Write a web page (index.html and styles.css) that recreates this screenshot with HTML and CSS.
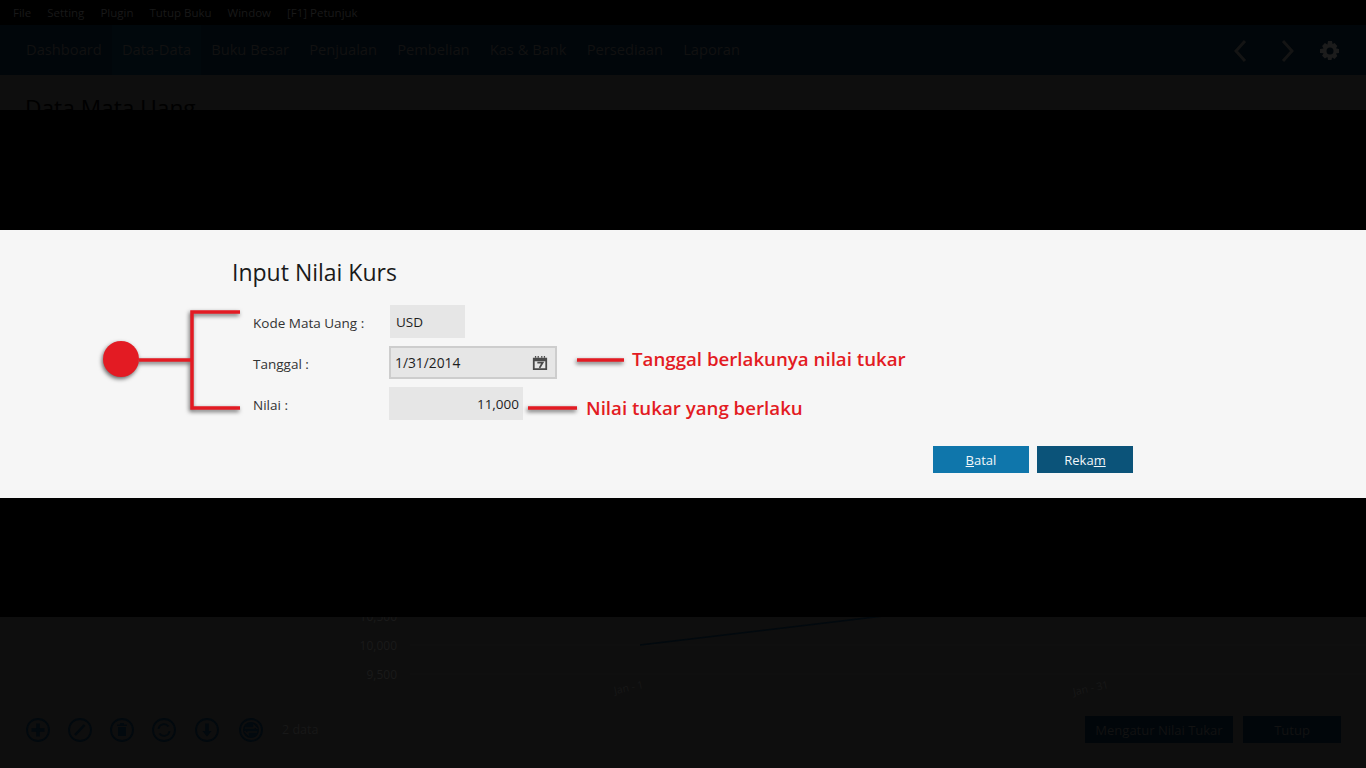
FILE: index.html
```html
<!DOCTYPE html>
<html lang="id">
<head>
<meta charset="utf-8">
<title>Data Mata Uang</title>
<link rel="stylesheet" href="styles.css">
</head>
<body>
<div class="app">
  <div class="menubar">
    <span>File</span><span>Setting</span><span>Plugin</span><span>Tutup Buku</span><span>Window</span><span>[F1] Petunjuk</span>
  </div>
  <nav class="navbar">
    <a>Dashboard</a><a class="active">Data-Data</a><a>Buku Besar</a><a>Penjualan</a><a>Pembelian</a><a>Kas &amp; Bank</a><a>Persediaan</a><a>Laporan</a>
    <div class="nav-tools">
      <svg class="chev-prev" width="13" height="24" viewBox="0 0 13 24"><path d="M11 2 2 12l9 10" class="chev"/></svg>
      <svg width="13" height="24" viewBox="0 0 13 24"><path d="M2 2l9 10-9 10" class="chev"/></svg>
      <svg width="22" height="22" viewBox="0 0 22 22"><path class="gear" fill-rule="evenodd" d="M9 1h4l.6 3 2-.9 2.8 2.8-1.4 2.4 3 .7v4l-3 .6 1.4 2.5-2.8 2.8-2.5-1.4-.6 2.5H9l-.6-2.9-2.5 1.4-2.8-2.8 1.4-2.5L1 13V9l3.500-.6L3.100 5.900l2.800-2.800 2.500 1.400zM11 7.500a3.500 3.500 0 1 0 0 7 3.500 3.500 0 0 0 0-7z"/></svg>
    </div>
  </nav>
  <main class="content">
    <h1>Data Mata Uang</h1>
    <svg class="chart" width="1366" height="643" viewBox="0 0 1366 643">
      <g class="grid"><path d="M410 520h1030M410 549h1030"/></g>
      <path class="series" d="M640 520 900 489"/>
      <g class="axis">
        <text x="397" y="496" text-anchor="end">10,500</text>
        <text x="397" y="525" text-anchor="end">10,000</text>
        <text x="397" y="554" text-anchor="end">9,500</text>
        <text class="tick" x="644" y="563" text-anchor="end" transform="rotate(-12 644 563)">Jan - 1</text>
        <text class="tick" x="1109" y="563" text-anchor="end" transform="rotate(-12 1109 563)">Jan - 31</text>
      </g>
    </svg>
    <footer class="toolbar">
      <div class="tool-icons">
        <svg class="tool" width="24" height="24" viewBox="0 0 24 24"><circle cx="12" cy="12" r="11"/><path class="thick" d="M12 5.500v13M5.500 12h13"/></svg>
        <svg class="tool" width="24" height="24" viewBox="0 0 24 24"><circle cx="12" cy="12" r="11"/><path class="thick-thin" d="M7 17 16.500 7"/></svg>
        <svg class="tool" width="24" height="24" viewBox="0 0 24 24"><circle cx="12" cy="12" r="11"/><path class="solid" d="M8 9h8v9H8zM7 6.500h10V8H7zM10 5h4v1.500h-4z"/></svg>
        <svg class="tool" width="24" height="24" viewBox="0 0 24 24"><circle cx="12" cy="12" r="11"/><path d="M6.500 11a5.500 5.500 0 0 1 10-2.500M17.500 13a5.500 5.500 0 0 1-10 2.500"/></svg>
        <svg class="tool tool-gap" width="24" height="24" viewBox="0 0 24 24"><circle cx="12" cy="12" r="11"/><path class="thick" d="M12 5.500v10"/><path class="solid" d="M7.500 13h9L12 18.500z"/></svg>
        <svg class="tool tool-gap-wide" width="24" height="24" viewBox="0 0 24 24"><circle cx="12" cy="12" r="11"/><circle class="solid" cx="12" cy="12" r="8"/><path class="cut" d="M6 10h9V7.500l3.500 3.500M18 14H9v2.500L5.500 13"/></svg>
      </div>
      <span class="count">2 data</span>
      <div class="page-actions">
        <button class="dark-btn wide">Mengatur Nilai Tukar</button>
        <button class="dark-btn">Tutup</button>
      </div>
    </footer>
  </main>
</div>

<div class="overlay">
  <section class="modal">
    <h2>Input Nilai Kurs</h2>
    <div class="form">
      <label>Kode Mata Uang :</label>
      <div class="field code">USD</div>
      <label>Tanggal :</label>
      <div class="field date">1/31/2014
        <svg class="cal" width="16" height="16" viewBox="0 0 18 18"><path class="cal-body" fill-rule="evenodd" d="M1 3h16v14H1zM3 7v8h12V7z"/><path class="cal-rings" d="M4 1v2M7 1v2M11 1v2M14 1v2"/><path class="cal-seven" d="M6 8.500h6L8.500 14.500"/></svg>
      </div>
      <label>Nilai :</label>
      <div class="field value">11,000</div>
    </div>
    <div class="modal-actions">
      <button class="btn batal"><u>B</u>atal</button>
      <button class="btn rekam">Reka<u>m</u></button>
    </div>
    <svg class="annot" width="1366" height="268" viewBox="0 0 1366 268">
      <g class="annot-lines">
        <circle class="dot" cx="121" cy="129" r="18"/>
        <path d="M139 130h53M240 82h-48v96h48M577 130h47M528 178h49"/>
      </g>
    </svg>
    <p class="note note-date">Tanggal berlakunya nilai tukar</p>
    <p class="note note-value">Nilai tukar yang berlaku</p>
  </section>
</div>
</body>
</html>
```
FILE: styles.css
```css
* { box-sizing: border-box; }
html, body { margin: 0; height: 100%; overflow: hidden; background: #0e0e0e; }
body { font-family: "Open Sans", "Noto Sans", sans-serif; }

.app { height: 768px; display: flex; flex-direction: column; }

.menubar { height: 25px; background: #000; display: flex; align-items: center; gap: 16px; padding: 0 0 1px 13px; font-size: 11.5px; color: #191919; }

.navbar { height: 50px; background: #01060a; display: flex; align-items: stretch; padding-left: 16px; font-size: 14.7px; color: #111; }
.navbar a { display: flex; align-items: center; padding: 0 10.1px 2px 10px; }
.navbar a.active { background: #01080c; }
.nav-tools { margin-left: auto; display: flex; align-items: center; gap: 25px; padding: 2px 25px 0 0; }
.chev-prev { margin-right: 9px; }
.chev { fill: none; stroke: #141414; stroke-width: 3; }
.gear { fill: #1c1c1c; }

.content { flex: 1; position: relative; display: flex; flex-direction: column; min-height: 0; }
.content h1 { margin: 0; padding: 16px 0 0 25px; font-size: 22.7px; font-weight: 400; color: #000; line-height: 34px; height: 50px; }
.chart { flex: none; display: block; overflow: hidden; }
.grid path { stroke: #111; fill: none; }
.series { stroke: #02090e; stroke-width: 1.5; fill: none; }
.axis text { font-size: 12px; fill: #1a1a1a; font-family: "Open Sans", sans-serif; }
.axis .tick { font-size: 10.5px; fill: #181818; }

.toolbar { position: absolute; left: 26px; right: 25px; bottom: 25px; height: 27px; display: flex; align-items: center; font-size: 12.500px; color: #181818; }
.tool-icons { display: flex; gap: 18px; }
.tool-gap { margin-left: 1px; }
.tool-gap-wide { margin-left: 2px; }
.tool { fill: none; stroke: #02090e; stroke-width: 1.8; }
.tool .thick { stroke-width: 3.500; }
.tool .thick-thin { stroke-width: 2.500; }
.tool .solid { fill: #02090e; stroke: none; }
.tool .cut { stroke: #0e0e0e; stroke-width: 1.500; }
.count { margin-left: 19px; }
.page-actions { margin-left: auto; display: flex; gap: 10px; }
.dark-btn { width: 98px; height: 27px; background: #01060a; border: 0; padding: 0; color: #121212; font: inherit; font-size: 13px; }
.dark-btn.wide { width: 148px; }

.overlay { position: absolute; left: 0; right: 0; top: 110px; height: 507px; background: #000; padding-top: 120px; }
.modal { position: relative; height: 268px; background: #f6f6f6; padding: 25px 0 0 232px; color: #1e1e1e; }
.modal h2 { margin: 0; font-size: 23px; font-weight: 400; line-height: 34px; color: #1a1a1a; height: 50px; }

.form { display: grid; grid-template-columns: 136px auto; grid-auto-rows: 33px; row-gap: 8px; padding-left: 21px; font-size: 13.5px; justify-items: start; align-items: center; }
.form label { color: #333; padding-top: 3px; }
.field { height: 33px; background: #e6e6e6; display: flex; align-items: center; font-size: 13.500px; color: #1e1e1e; }
.field.code { width: 75px; margin-left: 1px; padding: 0 0 0 6px; }
.field.date { width: 168px; border: 2px solid #cdcdcd; padding: 0 7px 0 4px; justify-content: space-between; font-size: 13.8px; }
.field.value { width: 134px; justify-content: flex-end; padding: 0 4px 0 0; }
.cal-body { fill: #4a4a4a; }
.cal-rings { stroke: #4a4a4a; stroke-width: 1.400; fill: none; }
.cal-seven { stroke: #4a4a4a; stroke-width: 2; fill: none; }
.cal { flex: none; }

.modal-actions { display: flex; gap: 8px; justify-content: flex-end; margin: 26px 233px 0 0; }
.btn { width: 96px; height: 27px; border: 0; padding: 0; color: #f2f6f9; font: inherit; font-size: 13px; }
.btn.batal { background: #0f76ab; }
.btn.rekam { background: #0b5379; }

.annot { position: absolute; left: 0; top: 0; pointer-events: none; }
.annot-lines { filter: drop-shadow(-1px 2px 2px rgba(0,0,0,.6)); }
.annot-lines path { fill: none; stroke: #e31b23; stroke-width: 3.500; }
.dot { fill: #e31b23; }
.note { position: absolute; margin: 0; color: #e31b23; font-size: 18.7px; font-weight: 600; line-height: 24px; white-space: nowrap; }
.note-date { left: 632px; top: 117px; }
.note-value { left: 586px; top: 166px; }
```
